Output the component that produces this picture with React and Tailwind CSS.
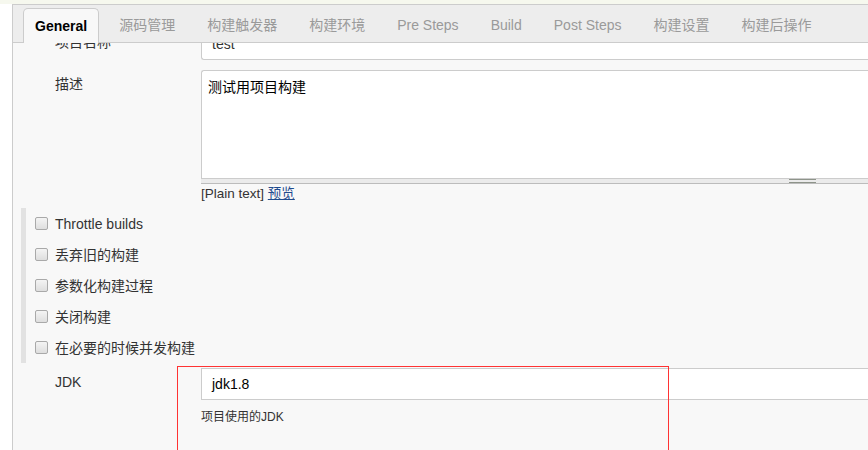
import React from 'react';

const tabs = ['源码管理', '构建触发器', '构建环境', 'Pre Steps', 'Build', 'Post Steps', '构建设置', '构建后操作'];
const options = ['Throttle builds', '丢弃旧的构建', '参数化构建过程', '关闭构建', '在必要的时候并发构建'];

const font = { fontFamily: '"Liberation Sans", Arial, "Noto Sans CJK SC", sans-serif' };

const Checkbox = () => (
    <span className="w-[13px] h-[13px] rounded-[2px] border border-[#a9a9a9] bg-gradient-to-b from-[#f4f4f4] to-[#dedede] shrink-0"></span>
);

const App = () => {
    return (
        <div className="w-[868px] h-[450px] overflow-hidden bg-white flex flex-col text-[14px] text-[#333]" style={font}>
            {/* top strip */}
            <div className="h-[4px] bg-[#f6f8ee] shrink-0"></div>

            <div className="flex flex-1 min-h-0">
                <div className="w-[12px] bg-white shrink-0"></div>

                <div className="flex-1 flex flex-col min-w-0 border-l border-t border-[#cccccc]">
                    {/* Tab bar */}
                    <div className="h-[38px] shrink-0 bg-[#ededed] border-b border-[#cccccc] flex items-end gap-2 pl-[10px] relative z-10">
                        <div className="h-[35px] -mb-[1px] px-[11px] flex items-center bg-[#f8f8f8] border border-b-0 border-[#cccccc] rounded-t-[5px] font-bold text-black">
                            General
                        </div>
                        {tabs.map((t) => (
                            <div key={t} className="h-[34px] px-3 flex items-center text-[#9a9a9a] whitespace-nowrap">
                                {t}
                            </div>
                        ))}
                    </div>

                    {/* Form content */}
                    <div className="flex-1 min-h-0 overflow-hidden bg-[#f8f8f8]">
                        <div className="-mt-[15px]">
                            {/* 项目名称 */}
                            <div className="grid grid-cols-[188px_1fr]">
                                <div className="pl-[42px] pt-[6px] leading-[17px]">项目名称</div>
                                <div className="h-[32px] bg-white border border-r-0 border-[#cccccc] rounded-l-[3px] pl-[10px] flex items-center">
                                    test
                                </div>
                            </div>

                            {/* 描述 */}
                            <div className="grid grid-cols-[188px_1fr] mt-[10px]">
                                <div className="pl-[42px] pt-[6px] leading-[17px]">描述</div>
                                <div>
                                    <div className="h-[109px] bg-white border border-r-0 border-[#cccccc] rounded-tl-[3px] pl-[6px] pt-[6px] leading-[20px] text-black">
                                        测试用项目构建
                                    </div>
                                    <div className="h-[5px] bg-[#ebebeb] border-b border-[#bcbcbc] flex justify-end pr-[52px]">
                                        <div className="w-[27px] h-[4px] border-t border-b border-[#8e948a]"></div>
                                    </div>
                                    <div className="leading-[18px] pt-[1px] h-[18px] text-[13.5px]">
                                        [Plain text] <a className="text-[#1f4b8e] underline">预览</a>
                                    </div>
                                </div>
                            </div>

                            {/* Options */}
                            <div className="mt-[6px] ml-[8px] border-l-[5px] border-[#e2e2e2] pl-[9px]">
                                {options.map((o) => (
                                    <div key={o} className="h-[31px] flex items-center gap-[7px]">
                                        <Checkbox />
                                        <span className="leading-[17px] pt-[2px]">{o}</span>
                                    </div>
                                ))}
                            </div>

                            {/* JDK */}
                            <div className="grid grid-cols-[188px_1fr] mt-[5px] relative">
                                <div className="pl-[42px] pt-[6px] leading-[17px]">JDK</div>
                                <div>
                                    <div className="h-[32px] bg-white border border-r-0 border-[#cccccc] pl-[10px] flex items-center text-black">
                                        jdk1.8
                                    </div>
                                    <div className="mt-[9px] text-[12px] leading-[16px]">项目使用的JDK</div>
                                </div>
                                {/* annotation box */}
                                <div className="absolute left-[164px] top-[-2px] w-[492px] h-[120px] border border-[#ff3333]"></div>
                            </div>
                        </div>
                    </div>
                </div>
            </div>
        </div>
    );
};

export default App;
